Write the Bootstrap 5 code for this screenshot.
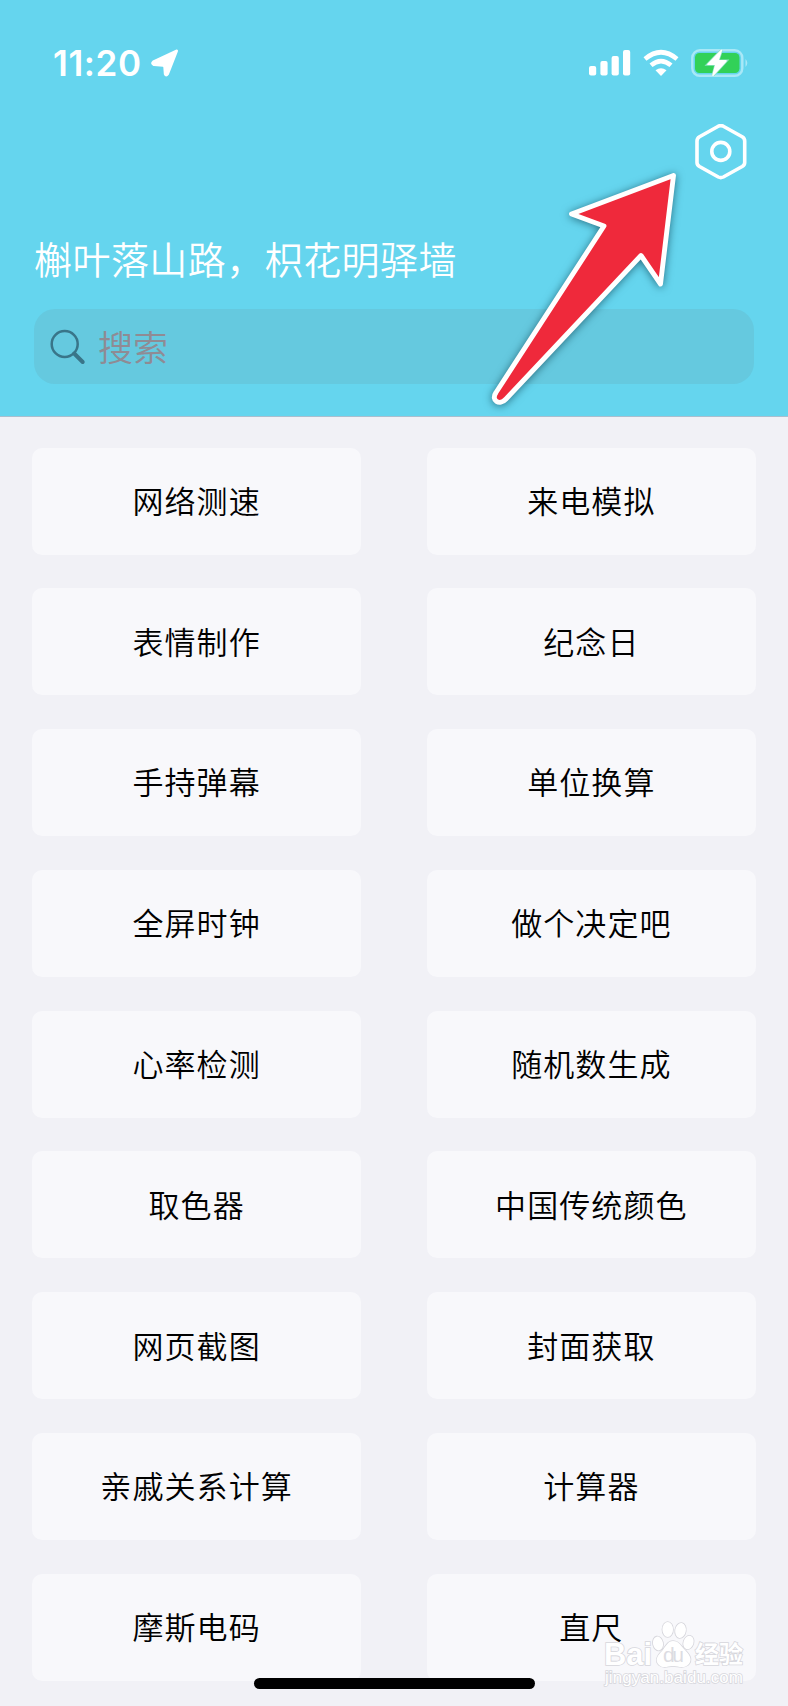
<!DOCTYPE html>
<html lang="zh-CN">
<head>
<meta charset="utf-8">
<meta name="viewport" content="width=device-width, initial-scale=1">
<title>工具箱</title>
<link href="https://cdn.jsdelivr.net/npm/bootstrap@5.3.0/dist/css/bootstrap.min.css" rel="stylesheet">
<style>
body{background:#f1f1f6;font-family:"Noto Sans CJK SC",sans-serif;color:#000}
.screen{height:1706px}
.hero{height:417px;background:#65d5ee;border-bottom:1px solid #a9bfcf}
.statusbar{height:125px;padding:0 39px 0 53px}
.clock{font:600 35px/42px Inter,sans-serif;letter-spacing:.6px;width:88px}
.location{margin-left:9px}
.wifi,.battery{margin-left:12px}
.settings-row{height:55px;padding-right:41px}
.settings-row svg{margin-top:-1px}
.greeting{font-size:38px;line-height:56px;font-weight:350;margin:50px 0 0 34px;letter-spacing:.45px}
.search{height:75px;margin:23px 34px 0;border-radius:21px;background:#65c9df;padding-left:16px;font-size:35px;font-weight:350}
.search input{color:#8f8b94;font-size:inherit;font-weight:inherit;outline:0;padding:0;height:60px;margin:-3px 0 0 12px}
.search input::placeholder{color:#8f8b94;opacity:1}
.tools{padding:30.5px 32px 0;column-gap:65.5px;row-gap:33.8px;grid-template-columns:1fr 1fr}
.tool{height:107px;border:0;border-radius:10px;background:#f8f8fb;color:#000;font-size:31px;font-weight:350;letter-spacing:1.1px;padding:0 0 2.5px 0;line-height:46px}
.homebar{left:254px;top:1678px;width:281px;height:11px}
.pointer{left:470px;top:150px;filter:drop-shadow(0 1px 4px rgba(0,45,60,.6))}
.mark-logo{left:600px;top:1617px}
</style>
</head>
<body>
<main class="screen position-relative overflow-hidden">
<header class="hero text-white">
  <div class="statusbar d-flex align-items-center">
    <span class="clock text-nowrap">11:20</span>
    <svg class="location" width="30" height="30" viewBox="0 0 30 30"><path d="M26.500 3 3.500 13.800Q1.500 15.500 4 16.600l9 .6q1.600.2 1.800 1.800l.5 7q.8 2 2.200 0Z" fill="#fff" stroke="#fff" stroke-width="3" stroke-linejoin="round"/></svg>
    <svg class="ms-auto" width="42" height="28" viewBox="0 0 42 28" fill="#fff"><rect y="17" width="7.2" height="9.5" rx="2"/><rect x="11.4" y="12" width="7.2" height="14.5" rx="2"/><rect x="22.6" y="7" width="7.2" height="19.5" rx="2"/><rect x="34" y="1" width="7.2" height="25.5" rx="2"/></svg>
    <svg class="wifi" width="36" height="28" viewBox="0 0 36 28" fill="none" stroke="#fff" stroke-width="4.6"><path d="M2 10Q18-3.5 34 10"/><path d="M8 16.3Q18 7.8 28 16.3"/><path d="M18 27 12.5 21.3Q18 17 23.5 21.3Z" fill="#fff" stroke="none"/></svg>
    <svg class="battery" width="58" height="30" viewBox="0 0 58 30"><rect x="1.3" y="2.3" width="50" height="25.5" rx="7.5" fill="none" stroke="#a9e8f7" stroke-width="2.4"/><path d="M54.5 11q3.600 4 0 8Z" fill="#a9e8f7"/><rect x="4" y="5" width="44.5" height="20" rx="4.5" fill="#32d158"/><path d="M30.300 2.500 17 16.300h8L22 27.300 35 12.900h-8.200Z" fill="#fff" stroke="#8de3c4" stroke-width="3"/><path d="M30.300 2.500 17 16.300h8L22 27.300 35 12.900h-8.200Z" fill="#fff" stroke="#fff" stroke-width="1.600" stroke-linejoin="round"/></svg>
  </div>
  <div class="settings-row d-flex justify-content-end">
    <svg width="53" height="58" viewBox="0 0 53 58" fill="none" stroke="#fff" stroke-width="3.6" stroke-linejoin="round"><path d="M24.3 2.200q2.500-1.200 5 0L48.200 12.800q2.500 1.500 2.500 4.200v21.500q0 2.500-2.500 4L29.300 53q-2.500 1.200-5 0L5.500 42.500q-2.500-1.500-2.500-4V17q0-2.700 2.500-4.200Z"/><circle cx="26.800" cy="27.400" r="9"/></svg>
  </div>
  <div class="greeting text-nowrap">槲叶落山路，枳花明驿墙</div>
  <div class="search d-flex align-items-center">
    <svg width="36" height="38" viewBox="0 0 36 38" fill="none" stroke="#397589"><circle cx="14.700" cy="16" r="13" stroke-width="2.500"/><path d="m24.200 25.500 8.500 8.500" stroke-width="4" stroke-linecap="round"/></svg>
    <input class="border-0 bg-transparent" placeholder="搜索" aria-label="搜索">
  </div>
</header>
<section class="tools d-grid">
  <button class="tool">网络测速</button><button class="tool">来电模拟</button>
  <button class="tool">表情制作</button><button class="tool">纪念日</button>
  <button class="tool">手持弹幕</button><button class="tool">单位换算</button>
  <button class="tool">全屏时钟</button><button class="tool">做个决定吧</button>
  <button class="tool">心率检测</button><button class="tool">随机数生成</button>
  <button class="tool">取色器</button><button class="tool">中国传统颜色</button>
  <button class="tool">网页截图</button><button class="tool">封面获取</button>
  <button class="tool">亲戚关系计算</button><button class="tool">计算器</button>
  <button class="tool">摩斯电码</button><button class="tool">直尺</button>
</section>
<svg class="pointer position-absolute" width="220" height="270" viewBox="0 0 220 270"><path d="M203.500 25.500 101.500 64 134 76 26 242.500C20.500 250.500 29.500 256 36 249L171 105.500 190.500 134Z" fill="#ef293b" stroke="#fff" stroke-width="4.900" stroke-linejoin="round"/></svg>
<svg class="mark-logo position-absolute" width="152" height="76" viewBox="0 0 152 76" fill="#fff" stroke="#d6d6dc" stroke-width="1.600" paint-order="stroke">
  <text x="4" y="48" font-family="Liberation Sans" font-weight="700" font-size="31" textLength="48" lengthAdjust="spacingAndGlyphs">Bai</text>
  <ellipse cx="58" cy="26.500" rx="5" ry="7" transform="rotate(-12 58 26.500)"/><ellipse cx="67.700" cy="12.500" rx="5.300" ry="7.500"/><ellipse cx="80.500" cy="13.500" rx="5.300" ry="7.500" transform="rotate(10 80.500 13.500)"/><ellipse cx="88.500" cy="25.500" rx="5" ry="6.800" transform="rotate(18 88.500 25.500)"/>
  <path d="M73 24c6 0 8 5 12 9 5 5 8 10 3 15-5 4-10 1-15 1s-10 3-14-1c-5-5-1-10 3-14 4-5 6-10 11-10Z"/>
  <text x="63" y="45" font-family="Liberation Sans" font-size="21" fill="#dcdce2" stroke="none" textLength="21">du</text>
  <text x="95" y="46" font-family="Noto Sans CJK SC" font-weight="700" font-size="24" textLength="48">经验</text>
  <text x="5" y="66" font-family="Liberation Sans" font-size="17" textLength="138">jingyan.baidu.com</text>
</svg>
<div class="homebar position-absolute bg-black rounded-pill"></div>
</main>
<script src="https://cdn.jsdelivr.net/npm/bootstrap@5.3.0/dist/js/bootstrap.bundle.min.js"></script>
</body>
</html>
